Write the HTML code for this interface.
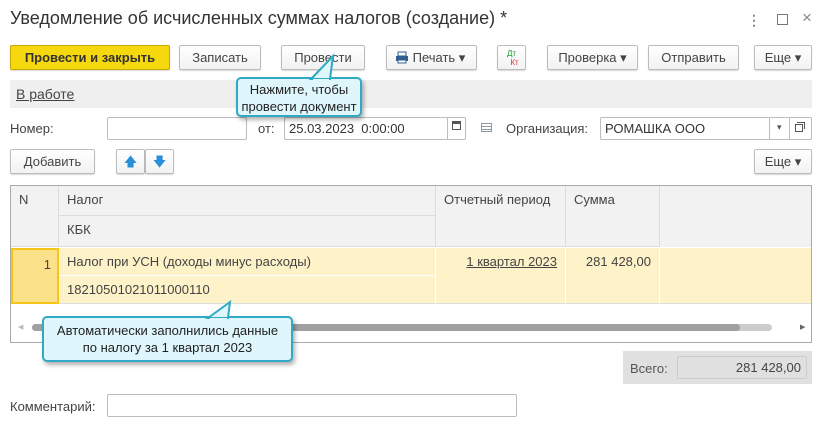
<!DOCTYPE html>
<html><head><meta charset="utf-8"><style>
*{box-sizing:border-box}
body{margin:0;width:832px;height:429px;background:#fff;font-family:"Liberation Sans",Arial,sans-serif;font-size:13px;color:#333;position:relative;overflow:hidden}
.a{position:absolute}
.btn{position:absolute;height:25px;border:1px solid #bdbdbd;border-radius:2px;background:linear-gradient(#fff,#f2f2f2);box-shadow:0 1px 1px rgba(0,0,0,.15);text-align:center;line-height:23px;color:#444}
.inp{position:absolute;border:1px solid #bdbdbd;border-radius:2px;background:#fff;height:23px;line-height:21px;padding-left:4px}
.cell{position:absolute;border-right:1px solid #ddd;border-bottom:1px solid #ddd;padding:6px 8px;color:#444}
.call{position:absolute;background:#dff6fd;border:2px solid #2fa9c4;border-radius:5px;text-align:center;color:#222;font-size:13px;line-height:17px;box-shadow:2px 3px 4px rgba(0,0,0,.3)}
</style></head><body>
<div class="a" style="left:10px;top:8px;font-size:18px;color:#333">Уведомление об исчисленных суммах налогов (создание) *</div>
<div class="a" style="left:747px;top:12px;font-size:14px;color:#888;font-weight:bold">⋮</div>
<div class="a" style="left:777px;top:14px;width:11px;height:11px;border:1px solid #777"></div>
<div class="a" style="left:802px;top:8px;font-size:17px;color:#888">×</div>

<div class="btn" style="left:10px;top:45px;width:160px;background:#f5d80d;border-color:#c9a800;font-weight:bold;color:#333">Провести и закрыть</div>
<div class="btn" style="left:179px;top:45px;width:82px">Записать</div>
<div class="btn" style="left:281px;top:45px;width:84px">Провести</div>
<div class="btn" style="left:386px;top:45px;width:91px;text-align:left;padding-left:8px"><svg width="14" height="13" style="vertical-align:-2px"><rect x="3" y="1" width="8" height="4" fill="none" stroke="#2f5f8f"/><rect x="1" y="5" width="12" height="5" fill="#2f5f8f"/><rect x="3" y="9" width="8" height="3" fill="#fff" stroke="#2f5f8f"/></svg> Печать ▾</div>
<div class="btn" style="left:497px;top:45px;width:29px;font-size:8px;line-height:9px;padding-top:3px"><span style="color:#1a9a2a">Дт</span><br><span style="color:#d33;padding-left:6px">Кт</span></div>
<div class="btn" style="left:547px;top:45px;width:91px">Проверка ▾</div>
<div class="btn" style="left:648px;top:45px;width:91px">Отправить</div>
<div class="btn" style="left:754px;top:45px;width:58px">Еще ▾</div>

<div class="a" style="left:10px;top:80px;width:802px;height:28px;background:#efefef"></div>
<div class="a" style="left:16px;top:86px;text-decoration:underline;font-size:14px;color:#444">В работе</div>

<div class="a" style="left:10px;top:121px;color:#444">Номер:</div>
<div class="inp" style="left:107px;top:117px;width:140px"></div>
<div class="a" style="left:258px;top:121px;color:#444">от:</div>
<div class="inp" style="left:284px;top:117px;width:182px">25.03.2023 &nbsp;0:00:00</div>
<div class="a" style="left:447px;top:118px;width:1px;height:21px;background:#bdbdbd"></div>
<div class="a" style="left:452px;top:121px;width:9px;height:9px;border:1px solid #555;border-top-width:3px"></div>
<div class="a" style="left:481px;top:123px;width:11px;height:9px;border:1px solid #8a9aa8;background:repeating-linear-gradient(#fff 0 2px,#8a9aa8 2px 3px)"></div>
<div class="a" style="left:506px;top:121px;color:#444">Организация:</div>
<div class="inp" style="left:600px;top:117px;width:212px;color:#333">РОМАШКА ООО</div>
<div class="a" style="left:769px;top:118px;width:1px;height:21px;background:#bdbdbd"></div>
<div class="a" style="left:777px;top:122px;font-size:9px;color:#555">▾</div>
<div class="a" style="left:789px;top:118px;width:1px;height:21px;background:#bdbdbd"></div>
<div class="a" style="left:795px;top:124px;width:8px;height:8px;border:1px solid #555"></div>
<div class="a" style="left:797px;top:122px;width:8px;height:7px;border:1px solid #555;border-left:0;border-bottom:0"></div>

<div class="btn" style="left:10px;top:149px;width:85px">Добавить</div>
<div class="btn" style="left:116px;top:149px;width:29px;color:#2a8ed8">🡅</div>
<div class="btn" style="left:145px;top:149px;width:29px;color:#2a8ed8">🡇</div>
<div class="btn" style="left:754px;top:149px;width:58px">Еще ▾</div>

<div class="a" style="left:10px;top:185px;width:802px;height:158px;border:1px solid #aaa;background:#fff"></div>
<div class="a" style="left:11px;top:186px;width:800px;height:61px;background:#f2f2f2"></div>
<div class="cell" style="left:11px;top:186px;width:48px;height:61px">N</div>
<div class="cell" style="left:59px;top:186px;width:377px;height:30px">Налог</div>
<div class="cell" style="left:59px;top:216px;width:377px;height:31px">КБК</div>
<div class="cell" style="left:436px;top:186px;width:130px;height:61px">Отчетный период</div>
<div class="cell" style="left:566px;top:186px;width:94px;height:61px">Сумма</div>
<div class="a" style="left:11px;top:248px;width:800px;height:56px;background:#fdf2c8"></div>
<div class="a" style="left:11px;top:248px;width:48px;height:56px;background:#fbe28a;border:2px solid #f5c518;text-align:right;padding:7px 6px;color:#444">1</div>
<div class="cell" style="left:59px;top:248px;width:377px;height:28px;border-color:#fff">Налог при УСН (доходы минус расходы)</div>
<div class="cell" style="left:59px;top:276px;width:377px;height:28px;border-color:#fff;border-bottom:1px solid #ddd">18210501021011000110</div>
<div class="cell" style="left:436px;top:248px;width:130px;height:56px;border-color:#fff;border-bottom:1px solid #ddd;text-align:right;text-decoration:underline">1 квартал 2023</div>
<div class="cell" style="left:566px;top:248px;width:94px;height:56px;border-color:#fff;border-bottom:1px solid #ddd;text-align:right">281 428,00</div>
<div class="a" style="left:660px;top:303px;width:151px;height:1px;background:#ddd"></div>
<div class="a" style="left:32px;top:324px;width:740px;height:7px;border-radius:4px;background:#ccc"></div>
<div class="a" style="left:32px;top:324px;width:708px;height:7px;border-radius:4px;background:#a0a0a0"></div>
<div class="a" style="left:18px;top:323px;font-size:7px;color:#bbb">◀</div>
<div class="a" style="left:800px;top:323px;font-size:7px;color:#666">▶</div>

<div class="a" style="left:623px;top:351px;width:189px;height:33px;background:#e0e0e0"></div>
<div class="a" style="left:630px;top:361px;color:#555">Всего:</div>
<div class="a" style="left:677px;top:356px;width:130px;height:23px;border:1px solid #ccc;border-radius:2px;text-align:right;padding:3px 5px;color:#444">281 428,00</div>

<div class="a" style="left:10px;top:399px;color:#444">Комментарий:</div>
<div class="inp" style="left:107px;top:394px;width:410px"></div>

<div class="call" style="left:236px;top:77px;width:126px;height:40px;padding-top:2px">Нажмите, чтобы<br>провести документ</div>
<div class="call" style="left:42px;top:316px;width:251px;height:46px;padding-top:4px">Автоматически заполнились данные<br>по налогу за 1 квартал 2023</div>
<svg class="a" style="left:0;top:0" width="832" height="429">
<polygon points="311,79 333,56 330,79" fill="#dff6fd" stroke="#2fa9c4" stroke-width="2"/>
<rect x="313" y="79" width="16" height="3" fill="#dff6fd"/>
<polygon points="208,318 230,302 228,318" fill="#dff6fd" stroke="#2fa9c4" stroke-width="2"/>
<rect x="210" y="318" width="17" height="3" fill="#dff6fd"/>
</svg>
</body></html>
